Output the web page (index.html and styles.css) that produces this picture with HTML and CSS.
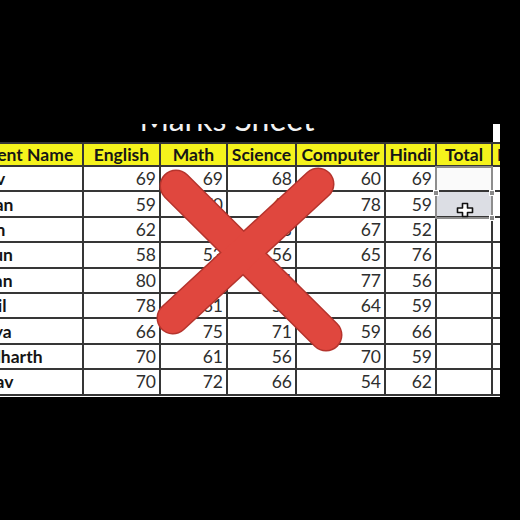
FILE: index.html
```html
<!DOCTYPE html>
<html>
<head>
<meta charset="utf-8">
<link rel="stylesheet" href="styles.css">
</head>
<body>
<div class="frame">
  <div class="sheet-wrap">
    <div class="sheet">
      <div class="title"><span>Marks Sheet</span></div>
      <div class="title-blank"></div>

      <div class="hd hd-name">Student Name</div>
      <div class="hd">English</div>
      <div class="hd">Math</div>
      <div class="hd">Science</div>
      <div class="hd">Computer</div>
      <div class="hd">Hindi</div>
      <div class="hd">Total</div>
      <div class="hd hd-extra">Result</div>

      <div class="nm">Rajiv</div><div class="n">69</div><div class="n">69</div><div class="n">68</div><div class="n">60</div><div class="n">69</div><div class="tot tot-active"></div><div class="ex"></div>
      <div class="nm">Aryan</div><div class="n">59</div><div class="n">70</div><div class="n">65</div><div class="n">78</div><div class="n">59</div><div class="tot tot-sel"></div><div class="ex"></div>
      <div class="nm">Arun</div><div class="n">62</div><div class="n">74</div><div class="n">63</div><div class="n">67</div><div class="n">52</div><div class="tot"></div><div class="ex"></div>
      <div class="nm">Varun</div><div class="n">58</div><div class="n">53</div><div class="n">56</div><div class="n">65</div><div class="n">76</div><div class="tot"></div><div class="ex"></div>
      <div class="nm">Aman</div><div class="n">80</div><div class="n">68</div><div class="n">74</div><div class="n">77</div><div class="n">56</div><div class="tot"></div><div class="ex"></div>
      <div class="nm">Kapil</div><div class="n">78</div><div class="n">61</div><div class="n">57</div><div class="n">64</div><div class="n">59</div><div class="tot"></div><div class="ex"></div>
      <div class="nm">Divya</div><div class="n">66</div><div class="n">75</div><div class="n">71</div><div class="n">59</div><div class="n">66</div><div class="tot"></div><div class="ex"></div>
      <div class="nm">Siddharth</div><div class="n">70</div><div class="n">61</div><div class="n">56</div><div class="n">70</div><div class="n">59</div><div class="tot"></div><div class="ex"></div>
      <div class="nm">Arnav</div><div class="n">70</div><div class="n">72</div><div class="n">66</div><div class="n">54</div><div class="n">62</div><div class="tot"></div><div class="ex"></div>
    </div>
  </div>

  <div class="selection"></div>
  <div class="handle h1"></div>
  <div class="handle h2"></div>
  <div class="handle h3"></div>

  <svg class="cursor" width="18" height="16" viewBox="0 0 18 16">
    <path d="M6.5 1.5h5v4.5h5v4.5h-5v4h-5v-4h-5v-4.5h5z" fill="#fff" stroke="#111" stroke-width="1.6" stroke-linejoin="round"/>
  </svg>

  <svg class="cross" width="520" height="520" viewBox="0 0 520 520">
    <g stroke="#b5342d" stroke-width="33" stroke-linecap="round" fill="none">
      <line x1="176" y1="186" x2="326" y2="335"/>
      <line x1="318" y1="184" x2="173" y2="318"/>
    </g>
    <g stroke="#e0473e" stroke-width="30" stroke-linecap="round" fill="none">
      <line x1="176" y1="186" x2="326" y2="335"/>
      <line x1="318" y1="184" x2="173" y2="318"/>
    </g>
  </svg>
</div>
</body>
</html>
```

FILE: styles.css
```css
html, body {
  margin: 0;
  padding: 0;
  background: #000;
}

.frame {
  position: relative;
  width: 520px;
  height: 520px;
  overflow: hidden;
  background: #000;
  font-family: Lato, "Open Sans", sans-serif;
}

.sheet-wrap {
  margin-top: 124px;
  width: 500px;
  height: 273px;
  overflow: hidden;
  background: #fff;
}

.sheet {
  display: grid;
  margin-left: -39px;
  grid-template-columns: 123px 77px 67px 69px 89px 51px 56px 60px;
  grid-template-rows: 18px 25px repeat(9, 25.4px);
}

.title {
  grid-column: 1 / 8;
  background: #000;
  overflow: hidden;
  color: #f2f2f2;
}

.title span {
  display: block;
  margin-top: -21px;
  font-size: 32px;
  line-height: 32px;
  text-align: center;
}

.title-blank {
  background: #fff;
}

.hd, .nm, .n, .tot, .ex {
  box-sizing: border-box;
  border-right: 2px solid #363636;
  border-bottom: 2px solid #363636;
  display: flex;
  align-items: center;
  overflow: hidden;
  white-space: nowrap;
}

.hd {
  border-top: 2px solid #363636;
  background: #f5f31c;
  justify-content: center;
  font-weight: 700;
  font-size: 17.5px;
  color: #161616;
}

.hd-name {
  padding-right: 8px;
}

.hd-extra {
  justify-content: flex-start;
  padding-left: 4px;
}

.nm {
  padding-left: 6px;
  font-weight: 700;
  font-size: 17.5px;
  color: #141414;
}

.n {
  justify-content: flex-end;
  padding-right: 3px;
  font-size: 17.5px;
  color: #2e2e2e;
}

.tot-active {
  background: #fafafa;
}

.tot-sel {
  background: #dcdee4;
}

.selection {
  position: absolute;
  left: 435px;
  top: 166px;
  width: 54px;
  height: 49px;
  border: 2px solid #8d8d8d;
}

.handle {
  position: absolute;
  width: 4px;
  height: 4px;
  background: #8a8a8a;
  border: 1px solid #fff;
}

.h1 { left: 433px; top: 190px; }
.h2 { left: 489px; top: 190px; }
.h3 { left: 489px; top: 215px; }

.cursor {
  position: absolute;
  left: 456px;
  top: 202px;
}

.cross {
  position: absolute;
  left: 0;
  top: 0;
  pointer-events: none;
}
```
